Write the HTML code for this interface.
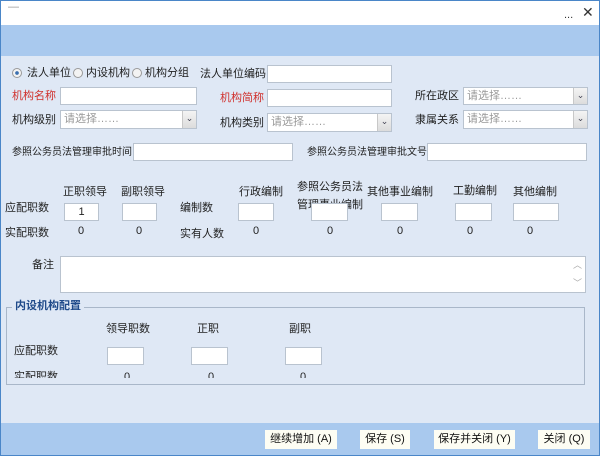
<!DOCTYPE html>
<html><head><meta charset="utf-8"><style>
*{margin:0;padding:0;box-sizing:border-box}
body{width:600px;height:456px;overflow:hidden;font-family:"Liberation Sans","Noto Sans CJK SC",sans-serif;font-size:11px;color:#222;background:#dfe8f5;position:relative}
.a{position:absolute;white-space:nowrap;line-height:13px}
.in{position:absolute;background:#fff;border:1px solid #b9c3cf}
.sel{position:absolute;background:#fff;border:1px solid #b9c3cf;color:#999;font-size:11px;padding:1px 0 0 3px;line-height:14px}
.sel i{position:absolute;right:0;top:0;bottom:0;width:14px;background:linear-gradient(#f4f4f4,#dcdcdc);border-left:1px solid #c8c8c8;font-style:normal;color:#445;font-size:9px;text-align:center;line-height:15px}
.red{color:#d0312d}
.s{font-size:10px}
.btn{position:absolute;background:#fdfdf3;font-size:11px;text-align:center;line-height:19px;height:19px;color:#111}
.rad{position:absolute;width:10px;height:10px;border-radius:50%;border:1px solid #999;background:#f3f3f3}
</style></head><body>
<div style="position:absolute;left:0;top:0;width:600px;height:456px;border:1px solid #4a86c8;z-index:9;pointer-events:none"></div>
<div style="position:absolute;left:0;top:0;width:600px;height:25px;background:#fff"></div>
<div class="a" style="left:8px;top:1px;color:#999">—</div>
<div class="a" style="left:564px;top:9px;color:#333">...</div>
<div class="a" style="left:582px;top:6px;font-size:14px;color:#333">✕</div>
<div style="position:absolute;left:0;top:25px;width:600px;height:31px;background:#a9c9ee"></div>

<div class="rad" style="left:12px;top:68px;background:radial-gradient(#3a6fb0 30%,#f3f3f3 35%)"></div>
<div class="a" style="left:27px;top:67px">法人单位</div>
<div class="rad" style="left:73px;top:68px"></div>
<div class="a" style="left:86px;top:67px">内设机构</div>
<div class="rad" style="left:132px;top:68px"></div>
<div class="a" style="left:145px;top:67px">机构分组</div>
<div class="a" style="left:200px;top:68px">法人单位编码</div>
<div class="in" style="left:267px;top:65px;width:125px;height:18px"></div>

<div class="a red" style="left:12px;top:90px">机构名称</div>
<div class="in" style="left:60px;top:87px;width:137px;height:18px"></div>
<div class="a red" style="left:220px;top:92px">机构简称</div>
<div class="in" style="left:267px;top:89px;width:125px;height:18px"></div>
<div class="a" style="left:415px;top:90px">所在政区</div>
<div class="sel" style="left:463px;top:87px;width:125px;height:18px">请选择……<i>⌄</i></div>

<div class="a" style="left:12px;top:114px">机构级别</div>
<div class="sel" style="left:60px;top:110px;width:137px;height:19px">请选择……<i>⌄</i></div>
<div class="a" style="left:220px;top:117px">机构类别</div>
<div class="sel" style="left:267px;top:113px;width:125px;height:19px">请选择……<i>⌄</i></div>
<div class="a" style="left:415px;top:114px">隶属关系</div>
<div class="sel" style="left:463px;top:110px;width:125px;height:19px">请选择……<i>⌄</i></div>

<div class="a s" style="left:12px;top:146px">参照公务员法管理审批时间</div>
<div class="in" style="left:133px;top:143px;width:160px;height:18px"></div>
<div class="a s" style="left:307px;top:146px">参照公务员法管理审批文号</div>
<div class="in" style="left:427px;top:143px;width:160px;height:18px"></div>

<div class="a" style="left:63px;top:186px">正职领导</div>
<div class="a" style="left:121px;top:186px">副职领导</div>
<div class="a" style="left:239px;top:186px">行政编制</div>
<div class="a" style="left:297px;top:181px">参照公务员法</div>
<div class="a" style="left:297px;top:199px">管理事业编制</div>
<div class="a" style="left:367px;top:186px">其他事业编制</div>
<div class="a" style="left:453px;top:185px">工勤编制</div>
<div class="a" style="left:513px;top:186px">其他编制</div>

<div class="a" style="left:5px;top:202px">应配职数</div>
<div class="in" style="left:64px;top:203px;width:35px;height:18px;text-align:center;line-height:16px">1</div>
<div class="in" style="left:122px;top:203px;width:35px;height:18px"></div>
<div class="a" style="left:180px;top:202px">编制数</div>
<div class="in" style="left:238px;top:203px;width:36px;height:18px"></div>
<div class="in" style="left:311px;top:203px;width:37px;height:18px"></div>
<div class="in" style="left:381px;top:203px;width:37px;height:18px"></div>
<div class="in" style="left:455px;top:203px;width:37px;height:18px"></div>
<div class="in" style="left:513px;top:203px;width:46px;height:18px"></div>

<div class="a" style="left:5px;top:227px">实配职数</div>
<div class="a" style="left:78px;top:225px">0</div>
<div class="a" style="left:136px;top:225px">0</div>
<div class="a" style="left:180px;top:228px">实有人数</div>
<div class="a" style="left:253px;top:225px">0</div>
<div class="a" style="left:327px;top:225px">0</div>
<div class="a" style="left:397px;top:225px">0</div>
<div class="a" style="left:467px;top:225px">0</div>
<div class="a" style="left:527px;top:225px">0</div>

<div class="a" style="left:32px;top:259px">备注</div>
<div class="in" style="left:60px;top:256px;width:526px;height:37px"><span class="a" style="right:3px;top:2px;color:#aaa;font-size:9px">︿</span><span class="a" style="right:3px;top:20px;color:#aaa;font-size:9px">﹀</span></div>

<div style="position:absolute;left:6px;top:307px;width:579px;height:78px;border:1px solid #a9b7c9">
<div style="position:absolute;left:0;top:0;width:577px;height:70px;overflow:hidden">
<div class="a" style="left:99px;top:15px">领导职数</div>
<div class="a" style="left:190px;top:15px">正职</div>
<div class="a" style="left:282px;top:15px">副职</div>
<div class="a" style="left:7px;top:37px">应配职数</div>
<div class="in" style="left:100px;top:39px;width:37px;height:18px"></div>
<div class="in" style="left:184px;top:39px;width:37px;height:18px"></div>
<div class="in" style="left:278px;top:39px;width:37px;height:18px"></div>
<div class="a" style="left:7px;top:63px">实配职数</div>
<div class="a" style="left:117px;top:63px">0</div>
<div class="a" style="left:201px;top:63px">0</div>
<div class="a" style="left:293px;top:63px">0</div>
</div>
</div>
<div class="a" style="left:12px;top:300px;background:#dfe8f5;padding:0 3px;color:#1f4a8a;font-weight:bold">内设机构配置</div>

<div style="position:absolute;left:0;top:423px;width:600px;height:33px;background:#a9c9ee"></div>
<div class="btn" style="left:265px;top:430px;width:72px">继续增加 (A)</div>
<div class="btn" style="left:360px;top:430px;width:50px">保存 (S)</div>
<div class="btn" style="left:434px;top:430px;width:81px">保存并关闭 (Y)</div>
<div class="btn" style="left:538px;top:430px;width:52px">关闭 (Q)</div>
</body></html>
